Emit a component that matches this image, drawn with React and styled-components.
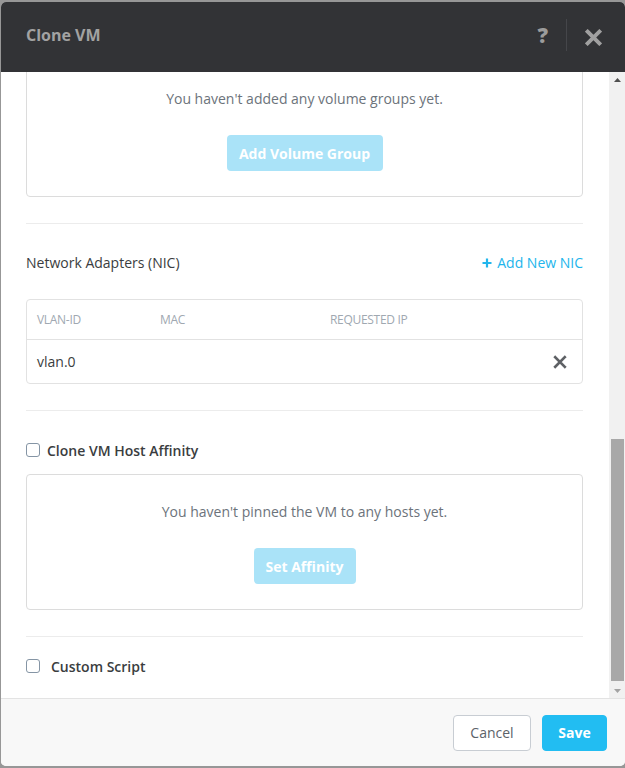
import React, { useRef, useLayoutEffect } from "react";
import styled, { createGlobalStyle } from "styled-components";

const GlobalStyle = createGlobalStyle`
  body {
    margin: 0;
    background: #979797;
    font-family: "Open Sans", Lato, sans-serif;
  }
`;

const Modal = styled.div`
  margin: 2px 0 0 1px;
  width: 624px;
  height: 764px;
  display: flex;
  flex-direction: column;
  background: #fff;
  border-radius: 5px;
  overflow: hidden;
`;

const Header = styled.div`
  height: 70px;
  flex-shrink: 0;
  display: flex;
  align-items: center;
  padding: 0 23px 0 25px;
  background: #323336;
`;

const Title = styled.div`
  flex: 1;
  font-size: 16px;
  font-weight: 700;
  color: #a2a2a2;
  margin-top: -4px;
`;

const HelpIcon = styled.span`
  font-size: 21px;
  font-weight: 800;
  color: #9c9c9c;
  line-height: 1;
  margin-top: -4px;
`;

const HeaderDivider = styled.div`
  width: 1px;
  height: 32px;
  margin: -4px 18px 0;
  background: #45464a;
`;

const BodyWrap = styled.div`
  flex: 1;
  min-height: 0;
  display: flex;
`;

const Scroller = styled.div`
  flex: 1;
  overflow-y: scroll;
  scrollbar-width: none;
  padding: 0 26px 0 25px;

  &::-webkit-scrollbar {
    display: none;
  }
`;

const ScrollTrack = styled.div`
  width: 16px;
  flex-shrink: 0;
  background: #f1f1f1;
  display: flex;
  flex-direction: column;
`;

const ScrollArrow = styled.div`
  height: 15px;
  display: flex;
  align-items: center;
  justify-content: center;
  padding-left: 1px;
`;

const ScrollThumb = styled.div`
  margin: auto 1px 2px 2px;
  height: 242px;
  background: #a8a8a8;
`;

const Section = styled.div`
  padding: ${(p) => p.$top || 30}px 0 ${(p) => p.$bottom || 26}px;
  border-top: ${(p) => (p.$first ? "none" : "1px solid #ececec")};
`;

const SectionHead = styled.div`
  display: flex;
  align-items: center;
  justify-content: space-between;
  margin-bottom: 28px;
  line-height: 17px;
`;

const SectionTitle = styled.div`
  font-size: 14px;
  color: #3a3d40;
`;

const LinkButton = styled.a`
  font-size: 14px;
  color: #22b5ec;
  cursor: pointer;
  display: flex;
  align-items: center;
  gap: 5px;
`;

const EmptyBox = styled.div`
  border: 1px solid #dcdcdc;
  border-radius: 4px;
  padding: 28px 0 25px;
  display: flex;
  flex-direction: column;
  align-items: center;
`;

const EmptyText = styled.div`
  font-size: 14px;
  line-height: 17px;
  color: #6c737b;
  margin-bottom: 28px;
`;

const LightButton = styled.button`
  height: 36px;
  width: ${(p) => p.$w}px;
  padding: 0;
  border: none;
  border-radius: 4px;
  background: #aae3f8;
  color: #fff;
  font-family: inherit;
  font-size: 14px;
  font-weight: 700;
`;

const Table = styled.div`
  border: 1px solid #e2e2e2;
  border-radius: 4px;
`;

const Row = styled.div`
  display: grid;
  grid-template-columns: 123px 170px 1fr 40px;
  align-items: center;
  padding-left: 10px;
  height: ${(p) => (p.$head ? 39 : 43)}px;
  border-top: ${(p) => (p.$head ? "none" : "1px solid #e2e2e2")};
`;

const HeadCell = styled.div`
  font-size: 12px;
  letter-spacing: -0.3px;
  color: #a0a8b1;
  text-transform: uppercase;
`;

const Cell = styled.div`
  font-size: 14px;
  color: #3a3d40;
`;

const RemoveButton = styled.span`
  display: flex;
  justify-content: flex-end;
  padding-right: 15px;
`;

const CheckRow = styled.label`
  display: flex;
  align-items: center;
  gap: ${(p) => p.$gap || 7}px;
  height: 18px;
  margin-bottom: ${(p) => p.$mb || 0}px;
`;

const CheckBox = styled.span`
  width: 12px;
  height: 12px;
  border: 1px solid #8595a5;
  border-radius: 3px;
  background: #fff;
`;

const CheckLabel = styled.span`
  font-size: 14px;
  font-weight: 600;
  color: #3a3d40;
`;

const Footer = styled.div`
  height: 67px;
  flex-shrink: 0;
  border-top: 1px solid #e3e3e3;
  background: #f8f8f8;
  display: flex;
  align-items: center;
  justify-content: flex-end;
  gap: 11px;
  padding-right: 18px;
`;

const Button = styled.button`
  height: 36px;
  width: ${(p) => (p.$primary ? 65 : 78)}px;
  padding: 0;
  border-radius: 4px;
  border: 1px solid ${(p) => (p.$primary ? "#22bdf2" : "#c8cdd3")};
  background: ${(p) => (p.$primary ? "#22bdf2" : "#fff")};
  color: ${(p) => (p.$primary ? "#fff" : "#5c6269")};
  font-family: inherit;
  font-size: 14px;
  font-weight: ${(p) => (p.$primary ? 700 : 400)};
`;

const CloseIcon = ({ size, color, width }) => (
  <svg width={size} height={size} viewBox="0 0 16 16">
    <path
      d="M2.5 2.5 L13.5 13.5 M13.5 2.5 L2.5 13.5"
      stroke={color}
      strokeWidth={width}
      strokeLinecap="square"
    />
  </svg>
);

const PlusIcon = () => (
  <svg width="10" height="10" viewBox="0 0 10 10">
    <path d="M5 0.5 V9.5 M0.5 5 H9.5" stroke="#22b5ec" strokeWidth="2.2" />
  </svg>
);

const Triangle = ({ down, color }) => (
  <svg width="7" height="4" viewBox="0 0 7 4">
    <path d={down ? "M0 0 H7 L3.5 4 Z" : "M0 4 H7 L3.5 0 Z"} fill={color} />
  </svg>
);

const App = () => {
  const bodyRef = useRef();

  useLayoutEffect(() => {
    const el = bodyRef.current;
    el.scrollTop = el.scrollHeight;
  }, []);

  return (
    <>
      <GlobalStyle />
      <Modal>
        <Header>
          <Title>Clone VM</Title>
          <HelpIcon>?</HelpIcon>
          <HeaderDivider />
          <CloseIcon size={17} color="#a0a0a0" width={3.6} />
        </Header>
        <BodyWrap>
          <Scroller ref={bodyRef}>
            <Section $first $top={20} $bottom={26}>
              <EmptyBox>
                <EmptyText>You haven't added any volume groups yet.</EmptyText>
                <LightButton $w={156}>Add Volume Group</LightButton>
              </EmptyBox>
            </Section>
            <Section>
              <SectionHead>
                <SectionTitle>Network Adapters (NIC)</SectionTitle>
                <LinkButton>
                  <PlusIcon />
                  Add New NIC
                </LinkButton>
              </SectionHead>
              <Table>
                <Row $head>
                  <HeadCell>VLAN-ID</HeadCell>
                  <HeadCell>MAC</HeadCell>
                  <HeadCell>Requested IP</HeadCell>
                  <span />
                </Row>
                <Row>
                  <Cell>vlan.0</Cell>
                  <Cell />
                  <Cell />
                  <RemoveButton>
                    <CloseIcon size={14} color="#5e6165" width={3} />
                  </RemoveButton>
                </Row>
              </Table>
            </Section>
            <Section>
              <CheckRow $mb={15}>
                <CheckBox />
                <CheckLabel>Clone VM Host Affinity</CheckLabel>
              </CheckRow>
              <EmptyBox>
                <EmptyText>You haven't pinned the VM to any hosts yet.</EmptyText>
                <LightButton $w={102}>Set Affinity</LightButton>
              </EmptyBox>
            </Section>
            <Section $top={20} $bottom={23}>
              <CheckRow $gap={11}>
                <CheckBox />
                <CheckLabel>Custom Script</CheckLabel>
              </CheckRow>
            </Section>
          </Scroller>
          <ScrollTrack>
            <ScrollArrow>
              <Triangle color="#505050" />
            </ScrollArrow>
            <ScrollThumb />
            <ScrollArrow>
              <Triangle down color="#a3a3a3" />
            </ScrollArrow>
          </ScrollTrack>
        </BodyWrap>
        <Footer>
          <Button>Cancel</Button>
          <Button $primary>Save</Button>
        </Footer>
      </Modal>
    </>
  );
};

export default App;
